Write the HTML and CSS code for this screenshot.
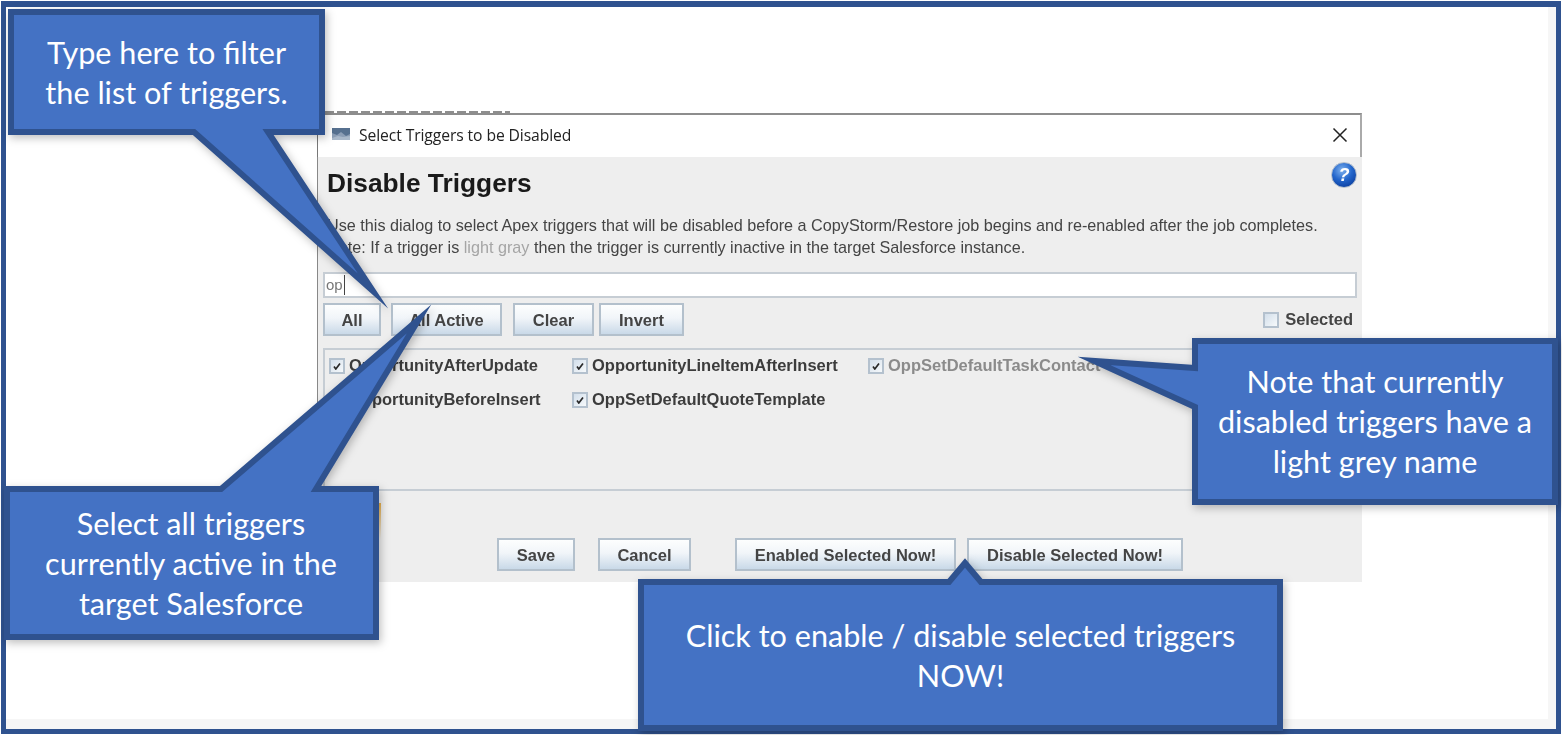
FILE: index.html
```html
<!DOCTYPE html>
<html lang="en">
<head>
<meta charset="utf-8">
<title>Select Triggers to be Disabled</title>
<link rel="stylesheet" href="styles.css">
</head>
<body>
<div class="page">
  <div class="frame">
    <div class="canvas">
      <div class="behind"></div>
      <div class="dialog">
        <div class="titlebar">
          <svg class="title-icon" width="18" height="12" viewBox="0 0 18 12"><rect width="18" height="12" fill="#8b9db5"/><path d="M0 0h18v6l-4 2-5-4-4 3-5-2z" fill="#56708f"/><path d="M0 10l6-2 5 1 7-1v4H0z" fill="#a9b8ca"/></svg>
          <span class="title-text">Select Triggers to be Disabled</span>
          <svg class="close-icon" width="16" height="16" viewBox="0 0 16 16"><path d="M1.500 1.500L14.500 14.500M14.500 1.500L1.500 14.500" stroke="#222" stroke-width="1.500" fill="none"/></svg>
        </div>
        <div class="content">
          <div class="heading-row">
            <h1 class="heading">Disable Triggers</h1>
            <div class="help">?</div>
          </div>
          <p class="desc">Use this dialog to select Apex triggers that will be disabled before a CopyStorm/Restore job begins and re-enabled after the job completes.</p>
          <p class="desc">Note: If a trigger is <span class="light">light gray</span> then the trigger is currently inactive in the target Salesforce instance.</p>
          <div class="filter"><span class="filter-text">op</span></div>
          <div class="actions">
            <div class="btn w-all">All</div>
            <div class="btn w-active">All Active</div>
            <div class="btn w-clear">Clear</div>
            <div class="btn w-invert">Invert</div>
            <div class="selected"><span class="box"></span><span>Selected</span></div>
          </div>
          <div class="list">
            <div class="item"><span class="box"><svg width="8" height="8" viewBox="0 0 8 8"><path d="M1 4.500L2.800 7 7 1.500" stroke="#2a2a2a" stroke-width="1.700" fill="none"/></svg></span><span>OpportunityAfterUpdate</span></div>
            <div class="item"><span class="box"><svg width="8" height="8" viewBox="0 0 8 8"><path d="M1 4.500L2.800 7 7 1.500" stroke="#2a2a2a" stroke-width="1.700" fill="none"/></svg></span><span>OpportunityLineItemAfterInsert</span></div>
            <div class="item off"><span class="box"><svg width="8" height="8" viewBox="0 0 8 8"><path d="M1 4.500L2.800 7 7 1.500" stroke="#2a2a2a" stroke-width="1.700" fill="none"/></svg></span><span>OppSetDefaultTaskContact</span></div>
            <div class="item"><span class="box"><svg width="8" height="8" viewBox="0 0 8 8"><path d="M1 4.500L2.800 7 7 1.500" stroke="#2a2a2a" stroke-width="1.700" fill="none"/></svg></span><span>OpportunityBeforeInsert</span></div>
            <div class="item"><span class="box"><svg width="8" height="8" viewBox="0 0 8 8"><path d="M1 4.500L2.800 7 7 1.500" stroke="#2a2a2a" stroke-width="1.700" fill="none"/></svg></span><span>OppSetDefaultQuoteTemplate</span></div>
          </div>
          <div class="footer">
            <div class="btn w-save">Save</div>
            <div class="btn w-cancel">Cancel</div>
            <div class="btn w-enable">Enabled Selected Now!</div>
            <div class="btn w-disable">Disable Selected Now!</div>
          </div>
        </div>
      </div>
    </div>
  </div>
  <div class="orange"></div>
  <svg class="shapes" width="1562" height="735" viewBox="0 0 1562 735">
    <path class="callout" d="M11 12H322V132H268L373 291 194 132H11Z"/>
    <path class="callout" d="M7 489H221L419 319 316 489H376V637H7Z"/>
    <path class="callout" d="M1195 341H1555V502H1195V407L1094 361 1195 368Z"/>
    <path class="callout" d="M641 582H949L965 563 981 582H1280V728H641Z"/>
  </svg>
  <div class="label label-filter">Type here to filter<br>the list of triggers.</div>
  <div class="label label-active">Select all triggers<br>currently active in the<br>target Salesforce</div>
  <div class="label label-note">Note that currently<br>disabled triggers have a<br>light grey name</div>
  <div class="label label-now">Click to enable / disable selected triggers<br>NOW!</div>
</div>
</body>
</html>
```

FILE: styles.css
```css
* { box-sizing: border-box; }
html, body { margin: 0; padding: 0; background: #fff; }
.page {
  position: relative;
  width: 1562px;
  height: 735px;
  padding: 1px;
  overflow: hidden;
  background: #fff;
}
.frame {
  height: 733px;
  border: 5px solid #2f528f;
  border-top-width: 6px;
  padding: 0 8px 10px 0;
  background: #f6f6f6;
}
.canvas {
  height: 100%;
  padding: 99px 0 0 311px;
  background: #fff;
}
.behind {
  width: 185px;
  height: 2px;
  margin: 5px 0 0 8px;
  opacity: .55;
  background: repeating-linear-gradient(90deg, #333 0 9px, transparent 9px 12px);
  filter: blur(.5px);
}
.dialog {
  width: 1045px;
  filter: blur(.6px);
  font-family: "Liberation Sans", Arial, sans-serif;
  color: #333;
}
.titlebar {
  display: flex;
  align-items: center;
  height: 44px;
  padding: 0 14px 3px;
  background: #fff;
  border-top: 2px solid #8d8d8d;
  border-left: 1px solid #777;
  border-right: 2px solid #aaa;
}
.title-icon { margin-right: 9px; margin-top: -2px; }
.title-text {
  font-family: "Open Sans", sans-serif;
  font-size: 15.700px;
  color: #222;
  letter-spacing: -.1px;
}
.close-icon { margin-left: auto; margin-right: -2px; }
.content {
  height: 425px;
  padding: 0 5px 0 5px;
  background: #eeeeee;
  border-left: 1px solid #888;
}
.heading-row {
  display: flex;
  justify-content: space-between;
  height: 57px;
  padding: 11px 0 0 4px;
}
.heading {
  margin: 0;
  font-size: 26.300px;
  line-height: 30px;
  font-weight: 700;
  color: #1a1a1a;
}
.help {
  width: 26px;
  height: 26px;
  margin-top: -6px;
  border: 1px solid #b4bfcc;
  border-radius: 50%;
  background: radial-gradient(circle at 42% 30%, #7fb2ee 0, #2366cc 45%, #0f44a6 78%, #5e86c4 100%);
  color: #fff;
  font: italic 700 18px/24px "Liberation Sans", sans-serif;
  text-align: center;
}
.desc {
  margin: 0;
  padding-left: 4px;
  font-size: 16.200px;
  line-height: 22px;
  color: #444;
  white-space: nowrap;
}
.light { color: #a5a5a5; }
.filter {
  display: flex;
  align-items: center;
  height: 26px;
  margin-top: 14px;
  padding-left: 1px;
  background: #fff;
  border: 2px solid #c6cdd4;
}
.filter-text {
  border-right: 1px solid #444;
  padding-right: 1px;
  font-size: 15px;
  line-height: 20px;
  color: #777;
}
.actions {
  display: flex;
  align-items: center;
  height: 33px;
  margin-top: 5px;
}
.btn {
  display: flex;
  align-items: center;
  justify-content: center;
  height: 33px;
  padding-top: 1px;
  border: 2px solid #b3c0cc;
  background: linear-gradient(180deg, #fdfefe 0, #f1f5f9 45%, #c9d9e8 100%);
  font-size: 16.500px;
  font-weight: 700;
  color: #444;
}
.w-all { width: 58px; margin-right: 10px; }
.w-active { width: 111px; margin-right: 11px; }
.w-clear { width: 81px; margin-right: 5px; }
.w-invert { width: 85px; }
.w-save { width: 78px; margin-left: 174px; margin-right: 23px; }
.w-cancel { width: 93px; margin-right: 44px; }
.w-enable { width: 221px; margin-right: 11px; }
.w-disable { width: 216px; }
.selected {
  display: flex;
  align-items: center;
  gap: 6px;
  margin-left: auto;
  padding-right: 4px;
  font-size: 16.500px;
  font-weight: 700;
  color: #444;
}
.box {
  display: flex;
  align-items: center;
  justify-content: center;
  flex: none;
  width: 16px;
  height: 16px;
  border: 2px solid #b4c1ce;
  background: linear-gradient(135deg, #d3dfeb, #f6f9fb);
}
.list {
  display: grid;
  grid-template-columns: 243px 296px 1fr;
  grid-auto-rows: 34px;
  align-content: start;
  height: 143px;
  margin-top: 12px;
  padding: 0 0 0 4px;
  border: 2px solid #c6cdd4;
  font-size: 16.500px;
  font-weight: 700;
  color: #3c3c3c;
}
.item {
  display: flex;
  align-items: center;
  gap: 4px;
  margin-top: -3px;
  white-space: nowrap;
}
.off { color: #8b8b8b; }
.footer {
  display: flex;
  margin-top: 47px;
}
.shapes {
  position: absolute;
  left: 0;
  top: 0;
  filter: drop-shadow(2px 3px 4px rgba(0, 0, 0, .25));
}
.callout {
  fill: #4472c4;
  stroke: #2f528f;
  stroke-width: 6;
  stroke-linejoin: miter;
  stroke-miterlimit: 30;
}
.orange {
  position: absolute;
  left: 378px;
  top: 503px;
  width: 3px;
  height: 36px;
  background: linear-gradient(180deg, #e8b04a, rgba(232, 176, 74, 0));
}
.label {
  position: absolute;
  color: #fff;
  font-family: Lato, "Open Sans", sans-serif;
  font-size: 30.600px;
  line-height: 40px;
  text-align: center;
  white-space: nowrap;
}
.label-filter { left: 14px; top: 33px; width: 305px; }
.label-active { left: 9px; top: 504px; width: 364px; }
.label-note { left: 1198px; top: 362px; width: 354px; }
.label-now { left: 644px; top: 616px; width: 633px; }
```
